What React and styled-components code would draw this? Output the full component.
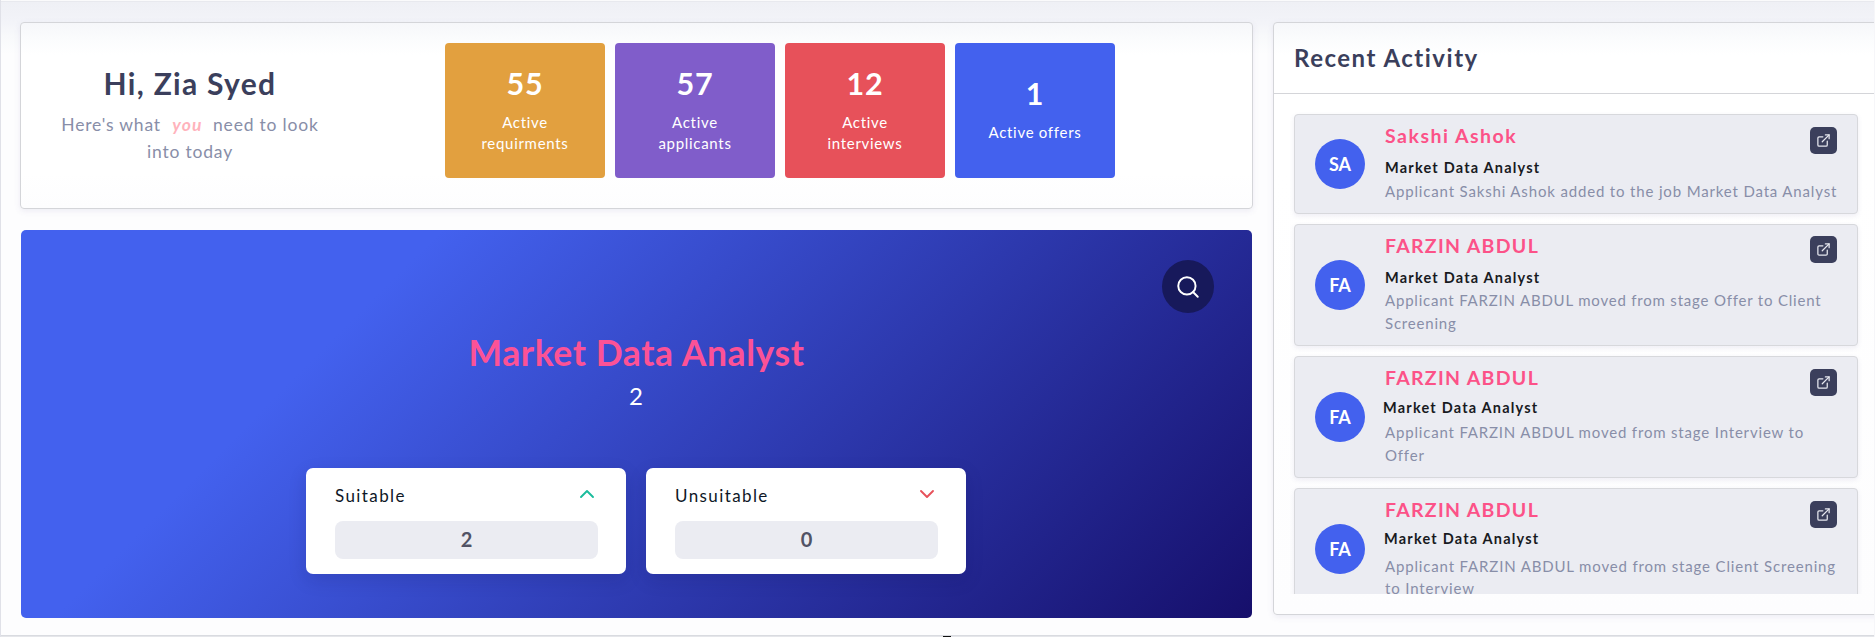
import React from "react";
import styled, { createGlobalStyle } from "styled-components";

const Global = createGlobalStyle`
  *, *::before, *::after { box-sizing: border-box; }
  body { margin: 0; background: #fff; overflow: hidden; }
  h1, h2, h3, h4, p { margin: 0; }
  button { border: 0; padding: 0; font: inherit; }
`;

const Page = styled.main`
  width: 1875px;
  height: 637px;
  overflow: hidden;
  display: flex;
  flex-direction: column;
  font-family: Lato, "Open Sans", sans-serif;
  white-space: nowrap;
  border-left: 1px solid #e0e1e8;
  border-right: 1px solid #f6f6f9;
  background: linear-gradient(180deg, #fafafb 0, #fafafb 1px, #e8e9ee 1px, #e8e9ee 2px, #eff0f5 2px, #f2f3f8 20px, #f8f9fb 36px, #fdfdfe 54px);
`;

const Columns = styled.div`
  display: flex;
  gap: 20px;
  height: 613px;
  margin-top: 22px;
  padding-left: 19px;
  flex: none;
`;

const LeftColumn = styled.div`
  display: flex;
  flex-direction: column;
  gap: 21px;
  width: 1233px;
  flex: none;
`;

const Panel = styled.section`
  border: 1px solid #d4d5d9;
  border-radius: 4px;
  background: linear-gradient(180deg, #f6f7fa 0, #fbfcfd 16px, #fff 32px, #fff 150px, #fdfdfe 100%);
  box-shadow: 0 2px 6px rgba(94, 92, 154, 0.1);
`;

const Summary = styled(Panel)`
  display: flex;
  height: 187px;
  padding-top: 20px;
`;

const Greeting = styled.div`
  width: 338px;
  margin-right: 86px;
  padding-top: 22px;
  text-align: center;
`;

const GreetingTitle = styled.h1`
  font-size: 30px;
  line-height: 36px;
  font-weight: 700;
  letter-spacing: 1.3px;
  color: #3b3f5c;
`;

const GreetingText = styled.p`
  margin-top: 10px;
  font-size: 17.5px;
  line-height: 27px;
  letter-spacing: 0.8px;
  color: #888ea8;
`;

const Highlight = styled.em`
  margin: 0 5px 0 6px;
  font-weight: 700;
  letter-spacing: 1.2px;
  color: #ffb3bc;
`;

const Stats = styled.div`
  display: flex;
  gap: 10px;
`;

const StatTile = styled.div`
  display: flex;
  flex-direction: column;
  align-items: center;
  justify-content: center;
  gap: 11px;
  width: 160px;
  height: 135px;
  padding-bottom: 3px;
  border-radius: 4px;
  color: #fff;
  text-align: center;
  background: ${(p) => p.$color};
`;

const StatValue = styled.strong`
  font-size: 30.5px;
  line-height: 36px;
  font-weight: 700;
  letter-spacing: 0.8px;
`;

const StatLabel = styled.span`
  font-size: 15px;
  line-height: 21px;
  letter-spacing: 0.7px;
`;

const JobCard = styled.section`
  display: flex;
  flex-direction: column;
  align-items: center;
  width: 1231px;
  height: 388px;
  margin-left: 1px;
  padding: 30px 38px 0;
  border-radius: 5px;
  background: linear-gradient(135deg, #4361ee 26%, #160f6b 100%);
`;

const SearchButton = styled.button`
  align-self: flex-end;
  display: flex;
  align-items: center;
  justify-content: center;
  width: 52px;
  height: 53px;
  border-radius: 50%;
  color: #fff;
  background: #17195b;
`;

const JobTitle = styled.h2`
  margin-top: 18px;
  font-size: 35.5px;
  line-height: 44px;
  font-weight: 700;
  letter-spacing: 0.6px;
  color: #fc5296;
`;

const JobCount = styled.p`
  margin-top: 5px;
  padding-right: 1px;
  font-size: 24px;
  line-height: 32px;
  color: #fff;
`;

const Verdicts = styled.div`
  display: flex;
  gap: 20px;
  margin: 56px 1px 0 0;
`;

const VerdictCard = styled.div`
  width: 320px;
  height: 106px;
  padding: 16px 28px 0 29px;
  border-radius: 7px;
  background: #fff;
  box-shadow: 0 6px 18px rgba(20, 20, 80, 0.16);
`;

const VerdictHead = styled.div`
  display: flex;
  justify-content: space-between;
  height: 24px;
  padding-right: 3px;
  font-size: 17px;
  line-height: 24px;
  letter-spacing: 1.4px;
  color: #0e1726;
`;

const Chevron = styled.svg`
  width: 16px;
  height: 10px;
  margin-top: 5px;
  color: ${(p) => p.$color};
`;

const VerdictValue = styled.div`
  height: 38px;
  margin-top: 13px;
  border-radius: 8px;
  font-size: 20px;
  line-height: 36px;
  font-weight: 700;
  text-align: center;
  color: #515365;
  background: #ebecf2;
`;

const Activity = styled(Panel)`
  width: 620px;
  flex: none;
  height: 593px;
`;

const ActivityTitle = styled.h2`
  height: 71px;
  padding: 18px 0 0 20px;
  border-bottom: 1px solid #d4d5d9;
  font-size: 24px;
  line-height: 34px;
  font-weight: 700;
  letter-spacing: 1.5px;
  color: #3b3f5c;
`;

const Feed = styled.div`
  display: flex;
  flex-direction: column;
  gap: 10px;
  height: 500px;
  padding: 20px 0 0 20px;
  overflow: hidden;
`;

const FeedCard = styled.article`
  display: flex;
  align-items: center;
  flex: none;
  width: 564px;
  height: ${(p) => p.$height}px;
  padding: 0 20px;
  border: 1px solid #d7d8dc;
  border-radius: 4px;
  background: #ebecf2;
  box-shadow: 0 2px 5px rgba(94, 92, 154, 0.1);
`;

const Avatar = styled.div`
  width: 50px;
  height: 50px;
  flex: none;
  border-radius: 50%;
  font-size: 18px;
  line-height: 50px;
  font-weight: 700;
  text-align: center;
  color: #fff;
  background: #4361ee;
`;

const FeedBody = styled.div`
  align-self: flex-start;
  flex: 1;
  padding: 8px 0 0 20px;
`;

const Person = styled.h3`
  font-size: 19.5px;
  line-height: 26px;
  font-weight: 700;
  letter-spacing: ${(p) => p.$spacing}px;
  color: #fc5288;
`;

const Role = styled.h4`
  margin: ${(p) => 8 - p.$lift}px 0 0 ${(p) => -p.$shift}px;
  font-size: 14.5px;
  line-height: 22px;
  font-weight: 700;
  letter-spacing: 1.2px;
  color: #181a1f;
`;

const Detail = styled.p`
  margin-top: ${(p) => p.$drop}px;
  font-size: 15px;
  line-height: ${(p) => p.$leading}px;
  letter-spacing: ${(p) => p.$spacing}px;
  color: #888ea8;
`;

const OpenButton = styled.button`
  align-self: flex-start;
  display: flex;
  align-items: center;
  justify-content: center;
  width: 27px;
  height: 27px;
  margin: ${(p) => p.$top}px 0 0 -27px;
  flex: none;
  border-radius: 5px;
  color: #e8e9f0;
  background: #3b3f5c;
`;

const NextRow = styled.footer`
  height: 2px;
  flex: none;
  padding: 1px 0 0 942px;
  background: linear-gradient(#d9dbe0 0, #d9dbe0 1px, #e5e6ea 1px);
`;

const Caret = styled.div`
  width: 8px;
  height: 1px;
  background: #111;
`;

const stats = [
  { value: "55", label: ["Active", "requirments"], color: "#e2a03f" },
  { value: "57", label: ["Active", "applicants"], color: "#805dca" },
  { value: "12", label: ["Active", "interviews"], color: "#e7515a" },
  { value: "1", label: ["Active offers"], color: "#4361ee" },
];

const feed = [
  { initials: "SA", name: "Sakshi Ashok", spacing: 1.5, detailSpacing: 0.84, height: 100, top: 12, lift: 0, shift: 0, drop: 1, leading: 23,
    detail: ["Applicant Sakshi Ashok added to the job Market Data Analyst"] },
  { initials: "FA", name: "FARZIN ABDUL", spacing: 1.3, detailSpacing: 0.8, height: 122, top: 11, lift: 0, shift: 0, drop: 0, leading: 23,
    detail: ["Applicant FARZIN ABDUL moved from stage Offer to Client", "Screening"] },
  { initials: "FA", name: "FARZIN ABDUL", spacing: 1.3, detailSpacing: 0.82, height: 122, top: 12, lift: 2, shift: 2, drop: 2, leading: 23,
    detail: ["Applicant FARZIN ABDUL moved from stage Interview to", "Offer"] },
  { initials: "FA", name: "FARZIN ABDUL", spacing: 1.3, detailSpacing: 0.84, height: 122, top: 12, lift: 3, shift: 1, drop: 5, leading: 22,
    detail: ["Applicant FARZIN ABDUL moved from stage Client Screening", "to Interview"] },
];

const Lines = ({ lines }) =>
  lines.map((line, i) => (
    <React.Fragment key={line}>
      {i > 0 && <br />}
      {line}
    </React.Fragment>
  ));

const strokeProps = {
  fill: "none",
  stroke: "currentColor",
  strokeLinecap: "round",
  strokeLinejoin: "round",
};

const SearchIcon = () => (
  <svg width="26" height="26" viewBox="0 0 24 24" strokeWidth="1.8" {...strokeProps}>
    <circle cx="11" cy="11" r="8" />
    <path d="M21 21l-4.35-4.35" />
  </svg>
);

const OpenIcon = () => (
  <svg width="15" height="15" viewBox="0 0 24 24" strokeWidth="2" {...strokeProps}>
    <path d="M18 13v6a2 2 0 0 1-2 2H5a2 2 0 0 1-2-2V8a2 2 0 0 1 2-2h6" />
    <path d="M15 3h6v6" />
    <path d="M10 14L21 3" />
  </svg>
);

const Verdict = ({ label, value, color, path }) => (
  <VerdictCard>
    <VerdictHead>
      {label}
      <Chevron $color={color} viewBox="0 0 16 10" strokeWidth="1.9" {...strokeProps}>
        <path d={path} />
      </Chevron>
    </VerdictHead>
    <VerdictValue>{value}</VerdictValue>
  </VerdictCard>
);

export default function App() {
  return (
    <>
      <Global />
      <Page>
        <Columns>
          <LeftColumn>
            <Summary>
              <Greeting>
                <GreetingTitle>Hi, Zia Syed</GreetingTitle>
                <GreetingText>
                  Here's what <Highlight>you</Highlight> need to look
                  <br />
                  into today
                </GreetingText>
              </Greeting>
              <Stats>
                {stats.map((s) => (
                  <StatTile key={s.value} $color={s.color}>
                    <StatValue>{s.value}</StatValue>
                    <StatLabel>
                      <Lines lines={s.label} />
                    </StatLabel>
                  </StatTile>
                ))}
              </Stats>
            </Summary>
            <JobCard>
              <SearchButton aria-label="Search">
                <SearchIcon />
              </SearchButton>
              <JobTitle>Market Data Analyst</JobTitle>
              <JobCount>2</JobCount>
              <Verdicts>
                <Verdict label="Suitable" value="2" color="#1abc9c" path="M2 8l6-6 6 6" />
                <Verdict label="Unsuitable" value="0" color="#e7515a" path="M2 2l6 6 6-6" />
              </Verdicts>
            </JobCard>
          </LeftColumn>
          <Activity>
            <ActivityTitle>Recent Activity</ActivityTitle>
            <Feed>
              {feed.map((f, i) => (
                <FeedCard key={i} $height={f.height}>
                  <Avatar>{f.initials}</Avatar>
                  <FeedBody>
                    <Person $spacing={f.spacing}>{f.name}</Person>
                    <Role $lift={f.lift} $shift={f.shift}>Market Data Analyst</Role>
                    <Detail $drop={f.drop} $leading={f.leading} $spacing={f.detailSpacing}>
                      <Lines lines={f.detail} />
                    </Detail>
                  </FeedBody>
                  <OpenButton $top={f.top} aria-label="Open">
                    <OpenIcon />
                  </OpenButton>
                </FeedCard>
              ))}
            </Feed>
          </Activity>
        </Columns>
        <NextRow>
          <Caret />
        </NextRow>
      </Page>
    </>
  );
}
